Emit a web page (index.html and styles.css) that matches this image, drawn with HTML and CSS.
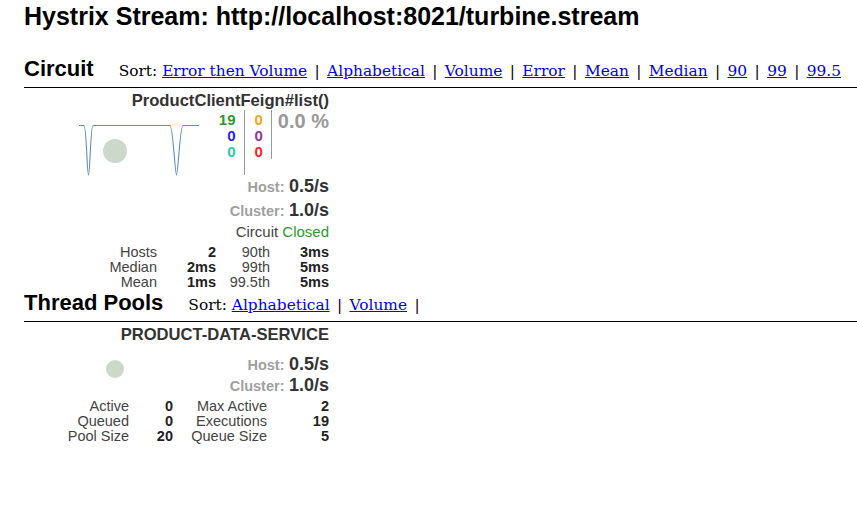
FILE: index.html
```html
<!DOCTYPE html>
<html>
<head>
<meta charset="utf-8">
<title>Hystrix Monitor</title>
<link rel="stylesheet" href="styles.css">
</head>
<body>
<h1 class="title">Hystrix Stream: http://localhost:8021/turbine.stream</h1>

<div class="section-head">
  <h2 class="section-title">Circuit</h2>
  <div class="sort">Sort: <a href="#">Error then Volume</a> | <a href="#">Alphabetical</a> | <a href="#">Volume</a> | <a href="#">Error</a> | <a href="#">Mean</a> | <a href="#">Median</a> | <a href="#">90</a> | <a href="#">99</a> | <a href="#">99.5</a></div>
</div>

<div class="card">
  <div class="card-name">ProductClientFeign#list()</div>
  <div class="graph-row">
    <svg class="spark" width="120" height="58" viewBox="0 0 120 58">
      <path d="M0,6.5 H5 C7.5,6.5 8,56 9.5,56 C11,56 11.5,6.5 14,6.5 H91 C94,6.5 96,56 97.5,56 C99,56 101,6.5 104,6.5 H120" fill="none" stroke="#5a8ec3" stroke-width="1.1"/>
      <circle cx="36" cy="32" r="12" fill="#cad9ca"/>
    </svg>
    <div class="counters">
      <div class="ccol ccol-a">
        <div class="c-success">19</div>
        <div class="c-short">0</div>
        <div class="c-bad">0</div>
      </div>
      <div class="ccol ccol-b">
        <div class="c-timeout">0</div>
        <div class="c-rejected">0</div>
        <div class="c-failure">0</div>
      </div>
      <div class="ccol ccol-c">0.0 %</div>
    </div>
  </div>
  <div class="rate"><span class="rate-label">Host:</span> <span class="rate-value">0.5/s</span></div>
  <div class="rate"><span class="rate-label">Cluster:</span> <span class="rate-value">1.0/s</span></div>
  <div class="status">Circuit <span class="closed">Closed</span></div>
  <div class="stats stats-circuit">
    <span class="lbl">Hosts</span><span class="val">2</span><span class="lbl">90th</span><span class="val">3ms</span>
    <span class="lbl">Median</span><span class="val">2ms</span><span class="lbl">99th</span><span class="val">5ms</span>
    <span class="lbl">Mean</span><span class="val">1ms</span><span class="lbl">99.5th</span><span class="val">5ms</span>
  </div>
</div>

<div class="section-head section-head-tp">
  <h2 class="section-title">Thread Pools</h2>
  <div class="sort">Sort: <a href="#">Alphabetical</a> | <a href="#">Volume</a> |</div>
</div>

<div class="card">
  <div class="card-name">PRODUCT-DATA-SERVICE</div>
  <div class="tp-body">
    <svg class="tp-dot" width="18" height="18" viewBox="0 0 18 18">
      <circle cx="9" cy="9" r="9" fill="#cad9ca"/>
    </svg>
    <div class="tp-rates">
      <div class="rate"><span class="rate-label">Host:</span> <span class="rate-value">0.5/s</span></div>
      <div class="rate"><span class="rate-label">Cluster:</span> <span class="rate-value">1.0/s</span></div>
    </div>
  </div>
  <div class="stats stats-tp">
    <span class="lbl">Active</span><span class="val">0</span><span class="lbl">Max Active</span><span class="val">2</span>
    <span class="lbl">Queued</span><span class="val">0</span><span class="lbl">Executions</span><span class="val">19</span>
    <span class="lbl">Pool Size</span><span class="val">20</span><span class="lbl">Queue Size</span><span class="val">5</span>
  </div>
</div>
</body>
</html>
```

FILE: styles.css
```css
html, body {
  margin: 0;
  padding: 0;
  background: #fff;
}
body {
  padding-left: 24px;
  font-family: "Liberation Sans", Arial, sans-serif;
  color: #333;
}
.title {
  margin: 0;
  padding-top: 1px;
  font-size: 25px;
  line-height: 30px;
  font-weight: bold;
  color: #000;
}
.section-head {
  display: flex;
  align-items: baseline;
  gap: 25px;
  margin-top: 25px;
  padding-bottom: 5px;
  border-bottom: 1px solid #000;
}
.section-head-tp {
  margin-top: 0;
}
.section-title {
  margin: 0;
  font-size: 22px;
  line-height: 26px;
  font-weight: bold;
  color: #000;
}
.sort {
  font-family: "DejaVu Serif", serif;
  font-size: 15.4px;
  color: #000;
}
.sort a {
  margin: 0 2.5px;
  color: #0000ee;
  text-decoration: underline;
}
.sort a:first-child {
  margin-left: 0;
}
.card {
  width: 305px;
  margin-top: 4px;
}
.card-name {
  text-align: right;
  font-size: 16.6px;
  line-height: 18px;
  font-weight: bold;
  color: #333;
}
.graph-row {
  display: flex;
  height: 65px;
}
.spark {
  margin-left: 55px;
  margin-top: 9px;
  flex: none;
}
.counters {
  margin-left: auto;
  display: flex;
  align-items: flex-start;
  font-weight: bold;
}
.ccol {
  font-size: 15px;
  line-height: 16px;
  text-align: right;
  box-sizing: border-box;
}
.ccol-a {
  height: 65px;
  padding: 2px 8px 0 0;
  border-right: 1px solid #999;
}
.ccol-b {
  height: 49px;
  padding: 2px 8px 0 10px;
  border-right: 1px solid #999;
}
.ccol-c {
  padding-left: 6px;
  font-size: 20px;
  line-height: 22px;
  color: #999;
}
.c-success { color: #2e9a2e; }
.c-short { color: #1f1fff; }
.c-bad { color: #2ccb9d; }
.c-timeout { color: #ffa31a; }
.c-rejected { color: #973497; }
.c-failure { color: #ff2424; }
.rate {
  text-align: right;
  line-height: 22px;
  font-weight: bold;
}
.rate + .rate {
  margin-top: 1px;
}
.tp-rates .rate + .rate {
  margin-top: -2px;
}
.rate-label {
  font-size: 14.5px;
  color: #a0a0a0;
}
.rate-value {
  font-size: 18px;
  color: #333;
}
.status {
  text-align: right;
  font-size: 15px;
  line-height: 20px;
  color: #444;
}
.closed {
  color: #2e9a2e;
}
.stats {
  display: grid;
  margin-top: 3px;
  font-size: 14.5px;
  line-height: 15px;
  text-align: right;
}
.stats-circuit {
  grid-template-columns: 133px 59px 54px 59px;
}
.stats-tp {
  grid-template-columns: 105px 44px 94px 62px;
  margin-top: 2px;
}
.lbl {
  color: #444;
}
.val {
  font-weight: bold;
  color: #222;
}
.tp-body {
  display: flex;
  padding-top: 9px;
}
.tp-dot {
  flex: none;
  margin-left: 82px;
  margin-top: 7px;
}
.tp-rates {
  margin-left: auto;
}
```
